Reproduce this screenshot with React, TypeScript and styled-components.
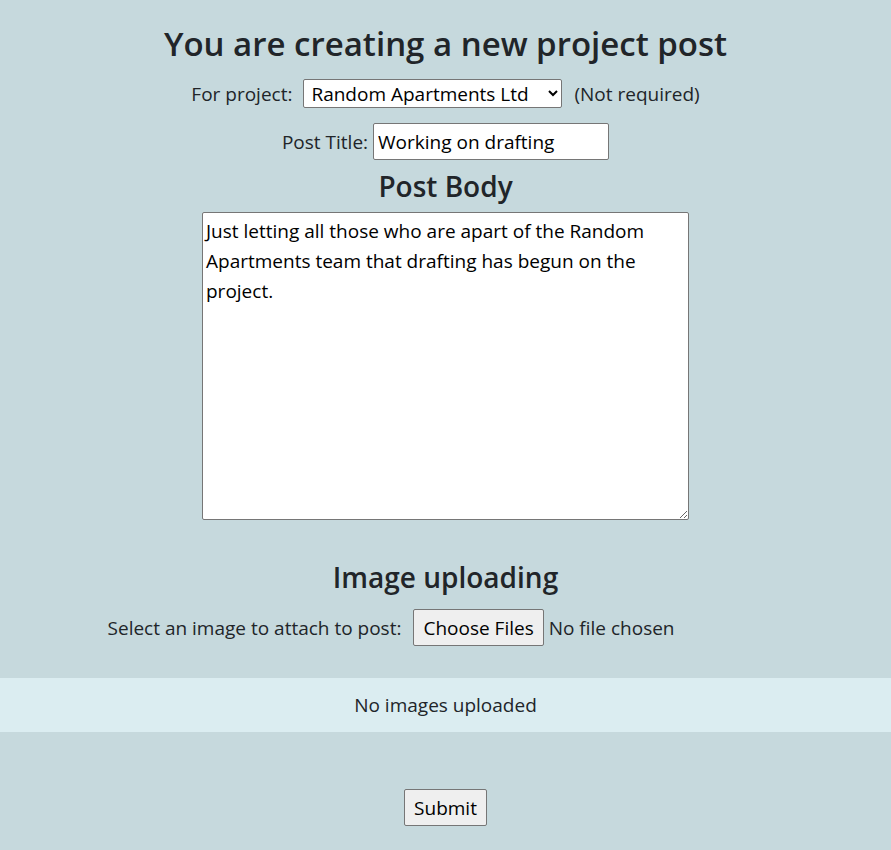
import React from "react";
import styled, { createGlobalStyle } from "styled-components";

const Global = createGlobalStyle`
  html, body { margin: 0; padding: 0; background: #c6d9dd; }
  body {
    font-family: "Open Sans", "Noto Sans", sans-serif;
    color: #212529;
    font-size: 19px;
  }
  * { box-sizing: border-box; }
`;

const Page = styled.div`
  min-height: 850px;
  display: flex;
  flex-direction: column;
  align-items: center;
  padding-top: 24px;
`;

const Title = styled.h1`
  margin: 0;
  font-size: 33px;
  font-weight: 600;
  line-height: 40px;
`;

const Row = styled.div<{ $mt: number }>`
  display: flex;
  align-items: center;
  justify-content: center;
  margin-top: ${(p) => p.$mt}px;
`;

const Label = styled.label`
  font-size: 19px;
  line-height: 28px;
`;

const Select = styled.select`
  margin: 0 12px 0 11px;
  width: 259px;
  height: 29px;
  font-family: inherit;
  font-size: 19px;
  color: #000;
  background: #fff;
  border: 1px solid #767676;
  border-radius: 2px;
  padding: 0 3px;
`;

const Muted = styled.span`
  font-size: 19px;
`;

const TextInput = styled.input`
  margin-left: 5px;
  width: 236px;
  height: 37px;
  font-family: inherit;
  font-size: 19px;
  color: #000;
  border: 1px solid #767676;
  border-radius: 2px;
  padding: 1px 4px;
  background: #fff;
`;

const SubHeading = styled.h3<{ $mt: number }>`
  margin: ${(p) => p.$mt}px 0 0;
  font-size: 28px;
  font-weight: 600;
  line-height: 34px;
`;

const Body = styled.textarea`
  margin-top: 9px;
  width: 487px;
  height: 308px;
  font-family: inherit;
  font-size: 19px;
  line-height: 30px;
  color: #000;
  border: 1px solid #767676;
  border-radius: 2px;
  padding: 3px 3px;
  background: #fff;
  resize: both;
`;

const FileInput = styled.input`
  margin-left: 12px;
  font-family: inherit;
  font-size: 19px;
  color: #212529;
  &::file-selector-button {
    font-family: inherit;
    font-size: 19px;
    height: 37px;
    padding: 0 9px;
    margin-right: 5px;
    background: #efefef;
    border: 1px solid #767676;
    border-radius: 2px;
    color: #000;
  }
`;

const Band = styled.div`
  align-self: stretch;
  margin-top: 32px;
  height: 54px;
  background: #dbedf1;
  display: flex;
  align-items: center;
  justify-content: center;
  font-size: 19px;
`;

const SubmitButton = styled.button`
  margin-top: 57px;
  height: 37px;
  padding: 0 9px;
  font-family: inherit;
  font-size: 19px;
  color: #000;
  background: #efefef;
  border: 1px solid #767676;
  border-radius: 2px;
`;

export default function App() {
  return (
    <>
      <Global />
      <Page>
        <Title>You are creating a new project post</Title>
        <Row $mt={15}>
          <Label>For project:</Label>
          <Select defaultValue="rand">
            <option value="rand">Random Apartments Ltd</option>
          </Select>
          <Muted>(Not required)</Muted>
        </Row>
        <Row $mt={15}>
          <Label>Post Title:</Label>
          <TextInput defaultValue="Working on drafting" />
        </Row>
        <SubHeading $mt={9}>Post Body</SubHeading>
        <Body defaultValue="Just letting all those who are apart of the Random Apartments team that drafting has begun on the project." />
        <SubHeading $mt={40}>Image uploading</SubHeading>
        <Row $mt={15}>
          <Label>Select an image to attach to post:</Label>
          <FileInput type="file" multiple />
        </Row>
        <Band>No images uploaded</Band>
        <SubmitButton>Submit</SubmitButton>
      </Page>
    </>
  );
}
